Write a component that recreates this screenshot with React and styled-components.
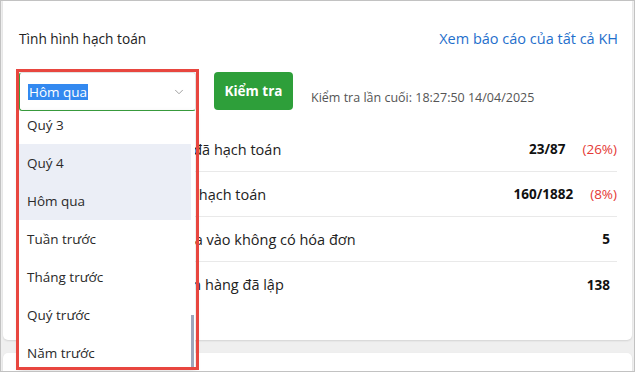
import React from "react";
import styled, { createGlobalStyle } from "styled-components";
import { ChevronDown } from "lucide-react";

const GlobalStyle = createGlobalStyle`
  html, body { margin: 0; padding: 0; }
  body {
    font-family: "Open Sans", "Noto Sans", sans-serif;
    color: #222;
    background: #efefef;
  }
  * { box-sizing: border-box; }
`;

const options = ["Quý 3", "Quý 4", "Hôm qua", "Tuần trước", "Tháng trước", "Quý trước", "Năm trước"];

const rows = [
  { label: "Số lượng hóa đơn xuất ra đã hạch toán", value: "23/87", percent: "(26%)" },
  { label: "Tổng hóa đơn mua vào đã hạch toán", value: "160/1882", percent: "(8%)" },
  { label: "Số lượng các chứng từ mua vào không có hóa đơn", value: "5" },
  { label: "Số lượng hóa đơn xuất bán hàng đã lập", value: "138" }
];

const App = () => {
  return (
    <>
      <GlobalStyle />
      <Frame>
        <Card>
          <Header>
            <Title>Tình hình hạch toán</Title>
            <Link>Xem báo cáo của tất cả KH</Link>
          </Header>

          <Toolbar>
            <Picker>
              <Select>
                <Selected>Hôm qua</Selected>
                <ChevronDown size={14} strokeWidth={1.6} color="#9a9a9a" />
              </Select>
              <Dropdown>
                <OptionList>
                  {options.map(opt => (
                    <Option key={opt} active={opt === "Quý 4" || opt === "Hôm qua"}>
                      {opt}
                    </Option>
                  ))}
                </OptionList>
                <Thumb />
              </Dropdown>
              <Annotation />
            </Picker>
            <CheckButton>Kiểm tra</CheckButton>
            <LastCheck>Kiểm tra lần cuối: 18:27:50 14/04/2025</LastCheck>
          </Toolbar>

          <Rows>
            {rows.map(r => (
              <Row key={r.label}>
                <Label>{r.label}</Label>
                <Value solo={!r.percent}>{r.value}</Value>
                {r.percent && <Percent>{r.percent}</Percent>}
              </Row>
            ))}
          </Rows>
        </Card>
        <Card2 />
      </Frame>
    </>
  );
};

export default App;

const Frame = styled.div`
  width: 635px;
  height: 372px;
  border: 1px solid #c2c2c2;
  background: #efefef;
  padding: 0 2px;
  overflow: hidden;
`;

const Card = styled.div`
  height: 339px;
  background: #fff;
  border-radius: 0 0 5px 5px;
  box-shadow: 0 1px 2px rgba(0, 0, 0, 0.12);
  padding: 22px 15px 0 16px;
`;

const Card2 = styled.div`
  margin-top: 13px;
  height: 40px;
  background: #fff;
  border-radius: 5px;
  box-shadow: 0 1px 2px rgba(0, 0, 0, 0.12);
`;

const Header = styled.div`
  height: 30px;
  display: flex;
  align-items: center;
  justify-content: space-between;
`;

const Title = styled.div`
  font-size: 13.7px;
  font-weight: 500;
  color: #222;
`;

const Link = styled.a`
  font-size: 14.5px;
  color: #1f6fcc;
  cursor: pointer;
  margin-right: -1px;
`;

const Toolbar = styled.div`
  margin-top: 19px;
  display: flex;
  align-items: flex-start;
`;

const Picker = styled.div`
  position: relative;
  width: 177px;
  height: 39px;
`;

const Select = styled.div`
  height: 39px;
  border: 1px solid #3a9f3e;
  border-top-color: #e2e2e2;
  border-right-color: #e2e2e2;
  border-radius: 3px;
  display: flex;
  align-items: center;
  justify-content: space-between;
  padding: 0 9px 0 8px;
`;

const Selected = styled.span`
  background: #3389f0;
  color: #fff;
  font-size: 13.5px;
  line-height: 16px;
  padding: 0 1px;
`;

const Dropdown = styled.div`
  position: absolute;
  top: 100%;
  left: 0;
  width: 176px;
  height: 258px;
  background: #fff;
  overflow: hidden;
  box-shadow: 0 2px 6px rgba(0, 0, 0, 0.15);
  z-index: 2;
`;

const OptionList = styled.div`
  margin-top: -5px;
  margin-right: 4px;
`;

const Option = styled.div`
  height: 38px;
  display: flex;
  align-items: center;
  padding-left: 8px;
  font-size: 13.5px;
  color: #2a2a2a;
  background: ${p => (p.active ? "#ebeef6" : "#fff")};
`;

const Thumb = styled.div`
  position: absolute;
  right: 1px;
  top: 204px;
  width: 3px;
  height: 54px;
  background: #9ea6bb;
`;

const Annotation = styled.div`
  position: absolute;
  left: -3px;
  top: -3px;
  width: 183px;
  height: 301px;
  border: 3px solid #e8463f;
  pointer-events: none;
  z-index: 3;
`;

const CheckButton = styled.button`
  margin-left: 18px;
  width: 79px;
  height: 38px;
  border: none;
  border-radius: 4px;
  background: #2e9f3a;
  color: #fff;
  font-family: inherit;
  font-size: 13.5px;
  font-weight: 700;
`;

const LastCheck = styled.div`
  margin-left: 18px;
  padding-top: 18px;
  line-height: 16px;
  font-size: 12.5px;
  color: #555;
`;

const Rows = styled.div`
  margin-top: 16px;
`;

const Row = styled.div`
  height: 45px;
  display: flex;
  align-items: center;
  border-bottom: 1px solid #e9e9e9;
  &:last-child {
    border-bottom: none;
  }
`;

const Label = styled.div`
  flex: 1;
  font-size: 14.5px;
  color: #222;
  white-space: nowrap;
`;

const Value = styled.div`
  font-size: 13.5px;
  font-weight: 700;
  color: #111;
  margin-right: ${p => (p.solo ? "7px" : "0")};
`;

const Percent = styled.div`
  margin-left: 17px;
  font-size: 13.5px;
  color: #e53935;
`;
